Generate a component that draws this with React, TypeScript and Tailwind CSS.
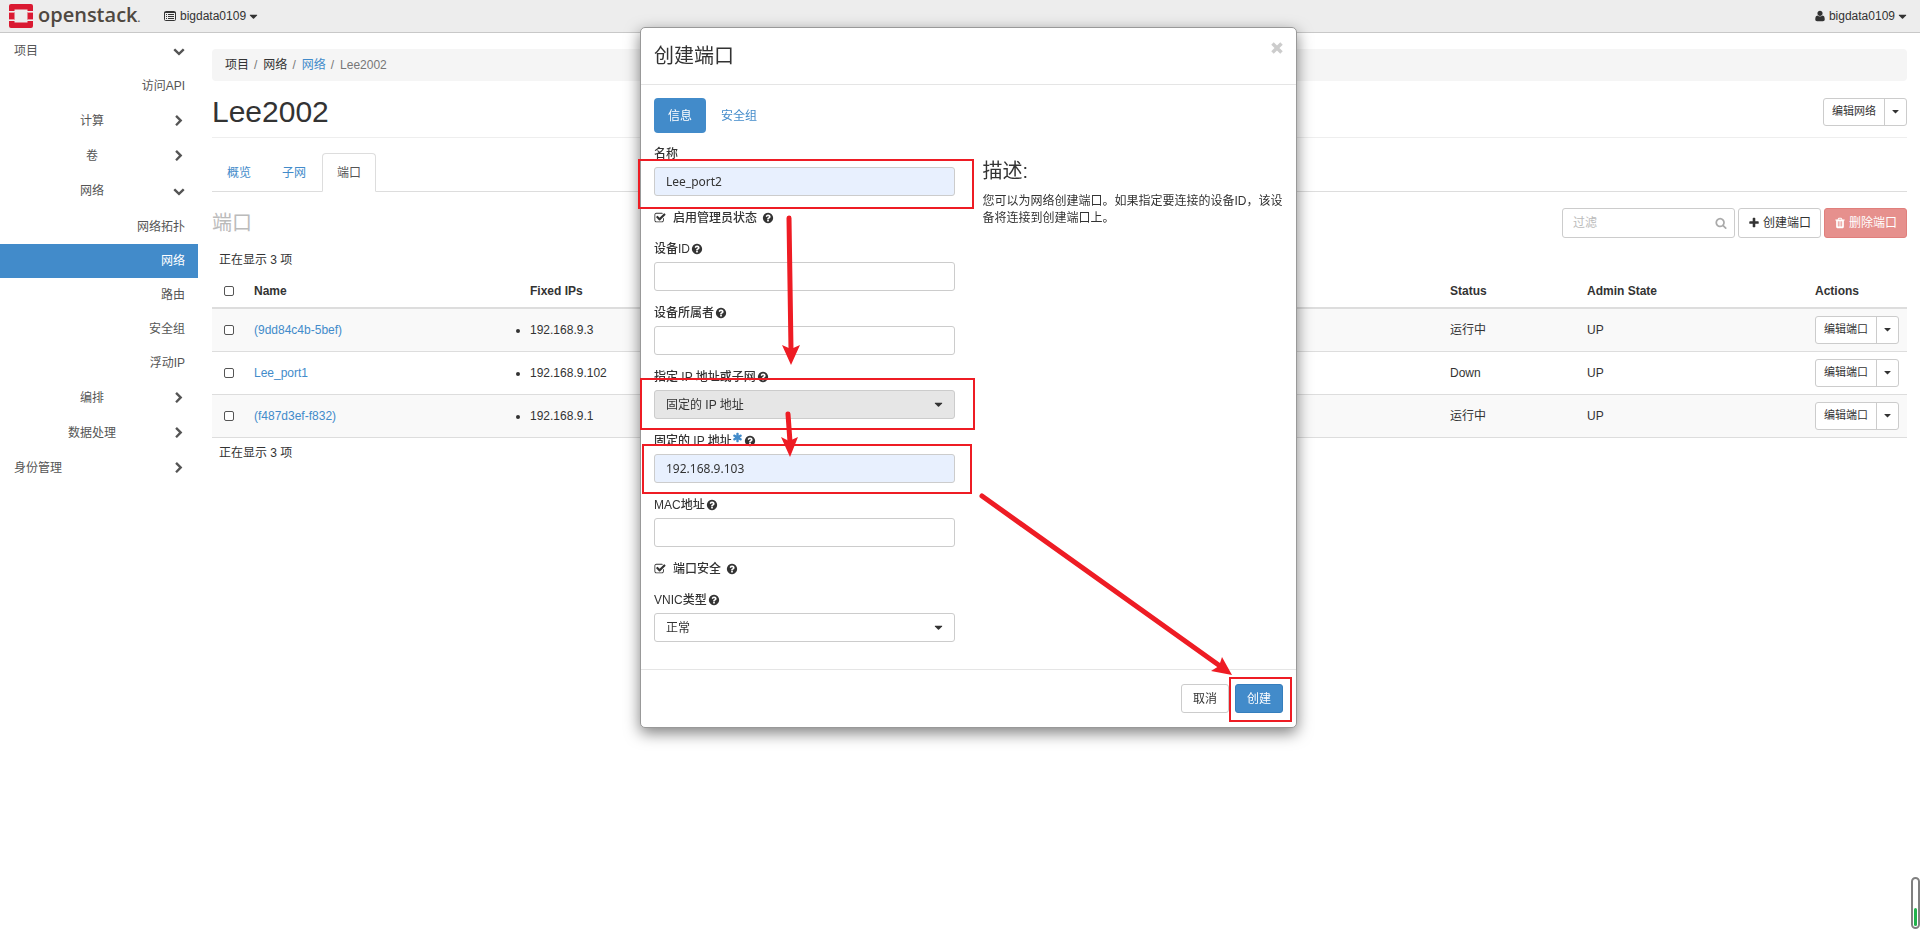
import { useState } from "react";
import type { ReactNode } from "react";
import clsx from "clsx";

const ICONS = {
  chevronDown: "M1683 808l-742 741q-19 19-45 19t-45-19l-742-741q-19-19-19-45.5t19-45.5l166-165q19-19 45-19t45 19l531 531 531-531q19-19 45-19t45 19l166 165q19 19 19 45.5t-19 45.5z",
  chevronRight: "M1363 877l-742 742q-19 19-45 19t-45-19l-166-166q-19-19-19-45t19-45l531-531-531-531q-19-19-19-45t19-45l166-166q19-19 45-19t45 19l742 742q19 19 19 45t-19 45z",
  caret: "M1408 704q0 26-19 45l-448 448q-19 19-45 19t-45-19l-448-448q-19-19-19-45t19-45 45-19h896q26 0 45 19t19 45z",
  help: "M1024 1376v-192q0-14-9-23t-23-9h-192q-14 0-23 9t-9 23v192q0 14 9 23t23 9h192q14 0 23-9t9-23zm256-672q0-88-55.5-163t-138.5-116-170-41q-243 0-371 213-15 24 8 42l132 100q7 6 19 6 16 0 25-12 53-68 86-92 34-24 86-24 48 0 85.5 26t37.5 59q0 38-20 61t-68 45q-63 28-115.5 86.5t-52.5 125.5v36q0 14 9 23t23 9h192q14 0 23-9t9-23q0-19 21.5-49.5t54.5-49.5q32-18 49-28.5t46-35 44.5-48 28-60.5 12.5-81zm384 192q0 209-103 385.5t-279.5 279.5-385.5 103-385.5-103-279.5-279.5-103-385.5 103-385.5 279.5-279.5 385.5-103 385.5 103 279.5 279.5 103 385.5z",
  plus: "M1600 736v192q0 40-28 68t-68 28h-416v416q0 40-28 68t-68 28h-192q-40 0-68-28t-28-68v-416h-416q-40 0-68-28t-28-68v-192q0-40 28-68t68-28h416v-416q0-40 28-68t68-28h192q40 0 68 28t28 68v416h416q40 0 68 28t28 68z",
  search: "M1216 832q0-185-131.5-316.5t-316.5-131.5-316.5 131.5-131.5 316.5 131.5 316.5 316.5 131.5 316.5-131.5 131.5-316.5zm512 832q0 52-38 90t-90 38q-54 0-90-38l-343-342q-179 124-399 124-143 0-273.5-55.5t-225-150-150-225-55.5-273.5 55.5-273.5 150-225 225-150 273.5-55.5 273.5 55.5 225 150 150 225 55.5 273.5q0 220-124 399l343 343q37 37 37 90z",
  trash: "M704 1376v-704q0-14-9-23t-23-9h-64q-14 0-23 9t-9 23v704q0 14 9 23t23 9h64q14 0 23-9t9-23zm256 0v-704q0-14-9-23t-23-9h-64q-14 0-23 9t-9 23v704q0 14 9 23t23 9h64q14 0 23-9t9-23zm256 0v-704q0-14-9-23t-23-9h-64q-14 0-23 9t-9 23v704q0 14 9 23t23 9h64q14 0 23-9t9-23zm-544-992h448l-48-117q-7-9-17-11h-317q-10 2-17 11zm928 32v64q0 14-9 23t-23 9h-96v948q0 83-47 143.5t-113 60.5h-832q-66 0-113-58.5t-47-141.5v-952h-96q-14 0-23-9t-9-23v-64q0-14 9-23t23-9h309l70-167q15-37 54-63t79-26h320q40 0 79 26t54 63l70 167h309q14 0 23 9t9 23z",
  user: "M1600 1405q0 120-73 189.5t-194 69.5h-874q-121 0-194-69.5t-73-189.5q0-53 3.5-103.5t14-109 26.5-108.5 43-97.5 62-81 85.5-53.5 111.5-20q9 0 42 21.5t74.5 48 108 48 133.5 21.5 133.5-21.5 108-48 74.5-48 42-21.5q61 0 111.5 20t85.5 53.5 62 81 43 97.5 26.5 108.5 14 109 3.5 103.5zm-320-893q0 159-112.5 271.5t-271.5 112.5-271.5-112.5-112.5-271.5 112.5-271.5 271.5-112.5 271.5 112.5 112.5 271.5z",
  checked: "M1472 930v318q0 119-84.5 203.5t-203.5 84.5h-832q-119 0-203.5-84.5t-84.5-203.5v-832q0-119 84.5-203.5t203.5-84.5h832q63 0 117 25 15 7 18 23 3 17-9 29l-49 49q-10 10-23 10-3 0-9-2-23-6-45-6h-832q-66 0-113 47t-47 113v832q0 66 47 113t113 47h832q66 0 113-47t47-113v-254q0-13 9-22l64-64q10-10 23-10 6 0 12 3 20 8 20 29zm231-489l-814 814q-24 24-57 24t-57-24l-430-430q-24-24-24-57t24-57l110-110q24-24 57-24t57 24l263 263 647-647q24-24 57-24t57 24l110 110q24 24 24 57t-24 57z",
  asterisk: "M1546 1050q46 26 59.5 77.5t-12.5 97.5l-64 110q-26 46-77.5 59.5t-97.5-12.5l-266-153v307q0 52-38 90t-90 38h-128q-52 0-90-38t-38-90v-307l-266 153q-46 26-97.5 12.5t-77.5-59.5l-64-110q-26-46-12.5-97.5t59.5-77.5l266-154-266-154q-46-26-59.5-77.5t12.5-97.5l64-110q26-46 77.5-59.5t97.5 12.5l266 153v-307q0-52 38-90t90-38h128q52 0 90 38t38 90v307l266-153q46-26 97.5-12.5t77.5 59.5l64 110q26 46 12.5 97.5t-59.5 77.5l-266 154z",
};

function Icon({ name, className = "size-3" }: { name: keyof typeof ICONS; className?: string }) {
  return (
    <svg viewBox="0 0 1792 1792" fill="currentColor" className={clsx("shrink-0", className)} aria-hidden="true">
      <path d={ICONS[name]} />
    </svg>
  );
}

const NAV = [
  { label: "项目", level: 1, open: true },
  { label: "访问API", level: 3 },
  { label: "计算", level: 2 },
  { label: "卷", level: 2 },
  { label: "网络", level: 2, open: true },
  { label: "网络拓扑", level: 3, first: true },
  { label: "网络", level: 3, active: true },
  { label: "路由", level: 3 },
  { label: "安全组", level: 3 },
  { label: "浮动IP", level: 3 },
  { label: "编排", level: 2 },
  { label: "数据处理", level: 2 },
  { label: "身份管理", level: 1 },
];

const PORTS = [
  { name: "(9dd84c4b-5bef)", ip: "192.168.9.3", status: "运行中", admin: "UP" },
  { name: "Lee_port1", ip: "192.168.9.102", status: "Down", admin: "UP" },
  { name: "(f487d3ef-f832)", ip: "192.168.9.1", status: "运行中", admin: "UP" },
];

function Navbar() {
  return (
    <header className="flex h-[33px] items-center border-b border-[#c8c8c8] bg-[#ededed] pl-[9px] pr-[11px]">
      <a href="#" className="flex items-center gap-[5px]">
        <svg width="24" height="24" viewBox="0 0 24 24" aria-hidden="true">
          <path fill="#da1a32" d="M2 0h20a2 2 0 0 1 2 2v5h-5.500V5.500h-13V7H0V2a2 2 0 0 1 2-2zM0 17h5.500v1.500h13V17H24v5a2 2 0 0 1-2 2H2a2 2 0 0 1-2-2zM0 8.200h5.500v7.600H0zM18.500 8.200H24v7.600h-5.500z" />
          <path fill="#f1969f" d="M0 8h5v1H0zM19 8h5v1h-5zM0 15h5v1H0zM19 15h5v1h-5z" />
        </svg>
        <span className="w-[103px] font-['Open_Sans',sans-serif] text-[20px] leading-6 font-semibold text-[#4f4841]">
          openstack<span className="text-[10px]">.</span>
        </span>
      </a>
      <button className="ml-[23px] flex items-center gap-1">
        <svg width="12" height="10" viewBox="0 0 12 10" fill="none" stroke="currentColor" aria-hidden="true">
          <rect x="0.500" y="0.500" width="11" height="9" rx="1" />
          <path d="M0.500 1.500h11M2 3.500h1M4 3.500h6M2 5.500h1M4 5.500h6M2 7.500h1M4 7.500h6" />
        </svg>
        bigdata0109
        <Icon name="caret" className="-ml-[3px] size-[13px]" />
      </button>
      <button className="ml-auto flex items-center gap-[3px]">
        <Icon name="user" />
        bigdata0109
        <Icon name="caret" className="-ml-[2px] size-[13px]" />
      </button>
    </header>
  );
}

function Sidebar() {
  return (
    <nav className="w-[198px] shrink-0 text-[#555]">
      {NAV.map((item, i) => (
        <a
          key={i}
          href="#"
          className={clsx(
            "flex items-center justify-end pr-[13px]",
            item.level === 1 && "h-9 pl-[14px]",
            item.level === 2 && "h-[35px]",
            item.level === 3 && "h-[34px]",
            item.first && "mt-[2px]",
            item.active && "bg-[#428bca] text-white"
          )}
        >
          {item.level === 2 && <span className="flex-1" />}
          <span className={clsx(item.level === 1 && "flex-1", item.level === 2 && "w-12 text-center")}>{item.label}</span>
          {item.level === 2 && <span className="w-[57px]" />}
          {item.level !== 3 && <Icon name={item.open ? "chevronDown" : "chevronRight"} />}
        </a>
      ))}
    </nav>
  );
}

function SplitButton({ children }: { children: ReactNode }) {
  return (
    <div className="inline-flex h-7 rounded-[3px] border border-[#ccc] bg-white text-[11px] whitespace-nowrap">
      <button className="px-2">{children}</button>
      <button aria-label="更多操作" className="flex w-[22px] items-center justify-center border-l border-[#ccc]">
        <Icon name="caret" className="size-[11px]" />
      </button>
    </div>
  );
}

function Tick({ label }: { label: string }) {
  return <input type="checkbox" aria-label={label} className="block h-[10px] w-[10px] appearance-none rounded-[2px] border border-[#555] bg-white checked:bg-[#428bca]" />;
}

function PortsTable() {
  return (
    <table className="w-full table-fixed border-collapse text-left">
      <colgroup>
        <col className="w-[34px]" />
        <col className="w-[276px]" />
        <col />
        <col className="w-[137px]" />
        <col className="w-[228px]" />
        <col className="w-[100px]" />
      </colgroup>
      <thead>
        <tr className="h-9 border-b-2 border-[#ddd]">
          <th className="pt-[2px] pl-3"><Tick label="全选" /></th>
          <th className="px-2 pt-[2px]">Name</th>
          <th className="px-2 pt-[2px]">Fixed IPs</th>
          <th className="px-2 pt-[2px]">Status</th>
          <th className="px-2 pt-[2px]">Admin State</th>
          <th className="px-2 pt-[2px]">Actions</th>
        </tr>
      </thead>
      <tbody>
        {PORTS.map(port => (
          <tr key={port.name} className="h-[43px] border-b border-[#ddd] odd:bg-[#f9f9f9]">
            <td className="pl-3"><Tick label={port.name} /></td>
            <td className="px-2"><a href="#" className="text-[#428bca]">{port.name}</a></td>
            <td className="px-2"><ul className="list-disc"><li>{port.ip}</li></ul></td>
            <td className="px-2">{port.status}</td>
            <td className="px-2">{port.admin}</td>
            <td className="px-2 align-middle"><div className="flex"><SplitButton>编辑端口</SplitButton></div></td>
          </tr>
        ))}
      </tbody>
    </table>
  );
}

function NetworkPage() {
  return (
    <main className="min-w-0 flex-1 pt-4 pl-[14px] pr-[13px]">
      <ol className="flex h-8 items-center rounded bg-[#f5f5f5] px-[13px]">
        <li>项目<span className="px-[5px] text-[#777]">/</span></li>
        <li className="pl-px">网络<span className="px-[5px] text-[#777]">/</span></li>
        <li className="pl-px"><a href="#" className="text-[#428bca]">网络</a><span className="px-[5px] text-[#777]">/</span></li>
        <li className="pl-px text-[#777]">Lee2002</li>
      </ol>
      <div className="mt-2 flex h-[49px] items-center justify-between border-b border-[#eee] pb-[3px]">
        <h1 className="text-[30px] leading-8">Lee2002</h1>
        <SplitButton>编辑网络</SplitButton>
      </div>
      <div className="mt-[15px] flex h-[39px] gap-px border-b border-[#ddd] text-[#428bca]">
        <a href="#" className="flex h-[39px] items-center px-[15px]">概览</a>
        <a href="#" className="flex h-[39px] items-center px-[15px]">子网</a>
        <a href="#" className="flex h-[39px] items-center rounded-t border border-b-white border-[#ddd] bg-white px-[14px] text-[#555]">端口</a>
      </div>
      <div className="mt-4 flex h-[30px] items-center gap-[3px]">
        <h2 className="flex-1 text-xl text-[#bbb]">端口</h2>
        <div className="relative">
          <input placeholder="过滤" aria-label="过滤" className="block h-[30px] w-[173px] rounded-[3px] border border-[#ccc] px-[10px] outline-none placeholder:text-[#bbb]" />
          <Icon name="search" className="absolute top-[9px] right-2 size-3 text-[#aaa]" />
        </div>
        <button className="flex h-[30px] items-center gap-[3px] rounded-[3px] border border-[#ccc] px-[9px]"><Icon name="plus" />创建端口</button>
        <button className="flex h-[30px] items-center gap-[3px] rounded-[3px] border border-[#e07f7c] bg-[#e6908d] px-[9px] text-white"><Icon name="trash" />删除端口</button>
      </div>
      <p className="mt-3 px-[7px] leading-5">正在显示 3 项</p>
      <div className="mt-[2px]">
        <PortsTable />
      </div>
      <p className="mt-[5px] px-[7px] leading-5">正在显示 3 项</p>
    </main>
  );
}

function Field({ id, label, help = true, required, children }: { id: string; label: string; help?: boolean; required?: boolean; children: ReactNode }) {
  return (
    <div className="mb-[13px]">
      <label htmlFor={id} className="mb-[5px] flex h-[17px] items-center gap-px font-medium">
        <span>{label}</span>
        {required && <Icon name="asterisk" className="-ml-px mb-[6px] size-[11px] text-[#428bca]" />}
        {help && <Icon name="help" />}
      </label>
      {children}
    </div>
  );
}

function TextBox({ id, value = "" }: { id: string; value?: string }) {
  return (
    <input
      id={id}
      defaultValue={value}
      className={clsx(
        "block h-[29px] w-full rounded-[3px] border border-[#ccc] px-[11px] font-['Noto_Sans',sans-serif] outline-none",
        value ? "bg-[#e8f0fe]" : "bg-white"
      )}
    />
  );
}

function SelectBox({ id, value, dark }: { id: string; value: string; dark?: boolean }) {
  return (
    <div className="relative">
      <select id={id} className={clsx("block h-[29px] w-full appearance-none rounded-[3px] border border-[#ccc] px-[11px] outline-none", dark ? "bg-[#e6e6e6]" : "bg-white")}>
        <option>{value}</option>
      </select>
      <Icon name="caret" className="pointer-events-none absolute top-2 right-[10px] size-[13px]" />
    </div>
  );
}

function CheckRow({ id, label }: { id: string; label: string }) {
  const [on, setOn] = useState(true);
  return (
    <div className="mb-[13px] flex h-[18px] items-center">
      <span className="relative size-3">
        <input id={id} type="checkbox" checked={on} onChange={e => setOn(e.target.checked)} className={clsx("absolute inset-0 appearance-none", !on && "rounded-[2px] border border-[#555]")} />
        {on && <Icon name="checked" className="pointer-events-none absolute inset-0 size-3" />}
      </span>
      <label htmlFor={id} className="mr-[5px] ml-[7px] font-medium">{label}</label>
      <Icon name="help" />
    </div>
  );
}

// red boxes and arrows that walk through the form
function Annotations() {
  return (
    <svg className="pointer-events-none absolute top-px -left-px overflow-visible" width="657" height="698" aria-hidden="true">
      <g fill="none" stroke="#ee1c24" strokeWidth="2">
        <rect x="-1" y="131" width="334" height="48" />
        <rect x="1" y="350" width="333" height="50" />
        <rect x="3" y="416" width="328" height="48" />
        <rect x="590" y="649" width="61" height="43" />
      </g>
      <g stroke="#ee1c24" strokeWidth="5" strokeLinecap="round">
        <path d="M149 189L151 321" />
        <path d="M148 385L150 413" />
        <path d="M342 467L580 637" />
      </g>
      <g fill="#ee1c24">
        <path d="M142 316L151 320L160 316L151 336z" />
        <path d="M141 408L149 412L158 408L150 428z" />
        <path d="M582 628L579 637L571 642L592 646z" />
      </g>
    </svg>
  );
}

function CreatePortDialog() {
  return (
    <div className="fixed inset-0 flex items-start justify-center pt-[27px] pl-[17px]">
      <div role="dialog" aria-labelledby="dialog-title" className="relative w-[657px] rounded-[5px] border border-[#999] bg-white shadow-[0_5px_15px_rgba(0,0,0,0.5)]">
        <div className="flex h-[57px] items-center justify-between border-b border-[#e5e5e5] px-[13px]">
          <h2 id="dialog-title" className="text-xl">创建端口</h2>
          <button aria-label="关闭" className="mb-4 text-[#ccc]">
            <svg width="12" height="12" viewBox="0 0 12 12" stroke="currentColor" strokeWidth="3.500" aria-hidden="true">
              <path d="M1.500 1.500l9 9M10.500 1.500l-9 9" />
            </svg>
          </button>
        </div>
        <form className="px-[13px] pt-[13px] pb-[14px]" onSubmit={e => e.preventDefault()}>
          <div className="mb-3 flex gap-px">
            <a href="#" className="flex h-[35px] items-center rounded bg-[#428bca] px-[14px] text-white">信息</a>
            <a href="#" className="flex h-[35px] items-center px-[14px] text-[#428bca]">安全组</a>
          </div>
          <div className="grid grid-cols-2 gap-7">
            <div>
              <Field id="name" label="名称" help={false}><TextBox id="name" value="Lee_port2" /></Field>
              <CheckRow id="admin-state" label="启用管理员状态" />
              <Field id="device-id" label="设备ID"><TextBox id="device-id" /></Field>
              <Field id="device-owner" label="设备所属者"><TextBox id="device-owner" /></Field>
              <Field id="specify-ip" label="指定 IP 地址或子网"><SelectBox id="specify-ip" value="固定的 IP 地址" dark /></Field>
              <Field id="fixed-ip" label="固定的 IP 地址" required><TextBox id="fixed-ip" value="192.168.9.103" /></Field>
              <Field id="mac" label="MAC地址"><TextBox id="mac" /></Field>
              <CheckRow id="port-security" label="端口安全" />
              <Field id="vnic" label="VNIC类型"><SelectBox id="vnic" value="正常" /></Field>
            </div>
            <div className="pt-3">
              <h3 className="mb-2 text-xl leading-7">描述:</h3>
              <p className="leading-[17px]">您可以为网络创建端口。如果指定要连接的设备ID，该设备将连接到创建端口上。</p>
            </div>
          </div>
        </form>
        <div className="flex justify-end gap-[6px] border-t border-[#e5e5e5] px-[13px] py-[14px]">
          <button className="h-[29px] rounded-[3px] border border-[#ccc] px-[11px]">取消</button>
          <button className="h-[29px] rounded-[3px] border border-[#357ebd] bg-[#428bca] px-[11px] text-white">创建</button>
        </div>
        <Annotations />
      </div>
    </div>
  );
}

export default function App() {
  return (
    <div className="min-h-screen bg-white font-['Liberation_Sans','Noto_Sans_CJK_SC',sans-serif] text-xs text-[#333]">
      <Navbar />
      <div className="flex">
        <Sidebar />
        <NetworkPage />
      </div>
      <CreatePortDialog />
      <div className="fixed right-0 bottom-[17px] flex h-[52px] w-[9px] items-end rounded-full border-2 border-[#808080] bg-white p-px">
        <div className="h-[18px] w-full rounded-full bg-[#22b14c]" />
      </div>
    </div>
  );
}
